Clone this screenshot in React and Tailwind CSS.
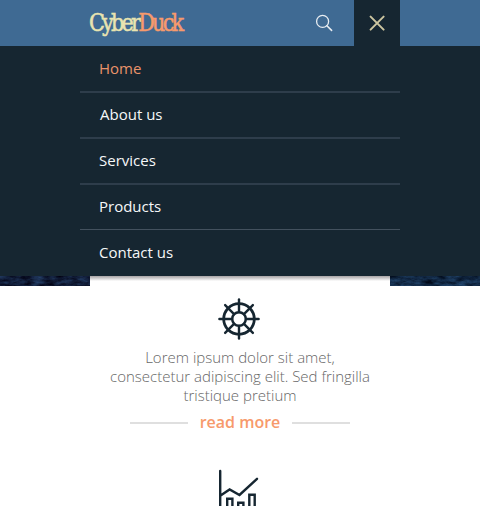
import React from 'react';

const rows = [
  { label: 'Home', cls: 'h-[47px] pl-[19px] leading-[45px] border-b-2 border-[#2e3d4b] text-[#ea936a]' },
  { label: 'About us', cls: 'h-[46px] pl-[20px] leading-[42px] border-b-2 border-[#2e3d4b] text-[#f6f8f9]' },
  { label: 'Services', cls: 'h-[46px] pl-[19px] leading-[42px] border-b-2 border-[#2e3d4b] text-[#f6f8f9]' },
  { label: 'Products', cls: 'h-[45px] pl-[19px] leading-[42px] border-b border-[#43515e] text-[#f6f8f9]' },
  { label: 'Contact us', cls: 'h-[46px] pl-[19px] leading-[44px] text-[#f6f8f9]' },
];

function Water({ seed, tone }) {
  const id = 'water' + seed;
  return (
    <svg className="block h-[10px] w-[90px]" viewBox="0 0 90 10">
      <filter id={id} x="0" y="0" width="100%" height="100%" colorInterpolationFilters="sRGB">
        <feTurbulence type="fractalNoise" baseFrequency="0.09 0.25" numOctaves="4" seed={seed} />
        <feColorMatrix values={`0.2 0 0 0 -0.03  0.36 0 0 0 ${tone - 0.02}  0.5 0 0 0 ${tone + 0.02}  0 0 0 0 1`} />
      </filter>
      <rect width="90" height="10" filter={`url(#${id})`} />
    </svg>
  );
}

function Wheel() {
  return (
    <svg className="mr-[2px] block size-[42px]" viewBox="-21 -21 42 42" fill="none" stroke="#162631" strokeLinecap="round">
      <circle r="15.3" strokeWidth="2.8" />
      <circle r="6.8" strokeWidth="2.5" />
      {[0, 45, 90, 135, 180, 225, 270, 315].map((a) => (
        <path key={a} d="M0-7V-19.6" strokeWidth="2.4" transform={`rotate(${a})`} />
      ))}
    </svg>
  );
}

export default function App() {
  return (
    <div className="h-[506px] w-[480px] overflow-hidden bg-white font-['Open_Sans','Noto_Sans',sans-serif]">
      <header className="h-[46px] bg-[#3f6a93]">
        <div className="mx-auto flex h-full w-[320px] items-center">
          <svg className="block h-[46px] w-[120px]" viewBox="0 0 120 46">
            <g transform="translate(9 0) scale(.98 1)">
              <text x="0" y="30.6" fontFamily="'DejaVu Serif Condensed', 'DejaVu Serif', serif" fontSize="23.5" textLength="97" lengthAdjust="spacing" fill="#e9e4b0" stroke="#e9e4b0" strokeWidth=".5">
                Cyber<tspan fill="#f79a6c" stroke="#f79a6c">Duck</tspan>
              </text>
            </g>
          </svg>
          <svg className="ml-[115px] block size-[18px]" viewBox="0 0 18 18" fill="none" stroke="#e8edf2" strokeWidth="1.3" strokeLinecap="round">
            <circle cx="7.6" cy="7.4" r="6" />
            <path d="m11.9 11.8 4.7 4.6" strokeWidth="1.6" />
          </svg>
          <div className="ml-auto flex h-full w-[46px] items-center justify-center bg-[#162631]">
            <svg className="block size-[16px]" viewBox="0 0 16 16" stroke="#ccc5a0" strokeWidth="2" strokeLinecap="round">
              <path d="m1.6 1.6 13 13M14.6 1.6l-13 13" />
            </svg>
          </div>
        </div>
      </header>
      <nav className="h-[230px] bg-[#162631]">
        <ul className="mx-auto w-[320px] text-[15px]">
          {rows.map((r) => (
            <li key={r.label} className={r.cls}>{r.label}</li>
          ))}
        </ul>
      </nav>
      <div className="flex h-[10px]">
        <Water seed={4} tone={-0.04} />
        <div className="w-[300px] bg-linear-to-b from-[#a6a2a4] to-white to-50%" />
        <Water seed={9} tone={0} />
      </div>
      <main className="flex flex-col items-center pt-[12px]">
        <Wheel />
        <p className="mt-[8px] text-center text-[15px] leading-[19px] font-light text-[#666]">
          Lorem ipsum dolor sit amet,<br />consectetur adipiscing elit. Sed fringilla<br />tristique pretium
        </p>
        <div className="mt-[7px] flex h-[22px] w-[220px] items-center justify-between">
          <span className="h-[2px] w-[58px] bg-[#dfdfdf]" />
          <span className="-mt-[2px] text-[16px] leading-[22px] font-semibold text-[#f79a6c]">read more</span>
          <span className="h-[2px] w-[58px] bg-[#dfdfdf]" />
        </div>
        <svg className="mt-[35px] mr-[2px] block h-[38px] w-[42px]" viewBox="0 0 42 38" fill="none" stroke="#162631" strokeWidth="2.4" strokeLinecap="round">
          <path d="M2.2 2v38M2.6 26.5l9-6L21.5 26 39 9.8" />
          <path d="M9.2 40V29.8h5.2V40M20.2 40v-6.2h5.2V40M31.3 40V25.7h5.4V40" strokeLinecap="butt" />
        </svg>
      </main>
    </div>
  );
}
